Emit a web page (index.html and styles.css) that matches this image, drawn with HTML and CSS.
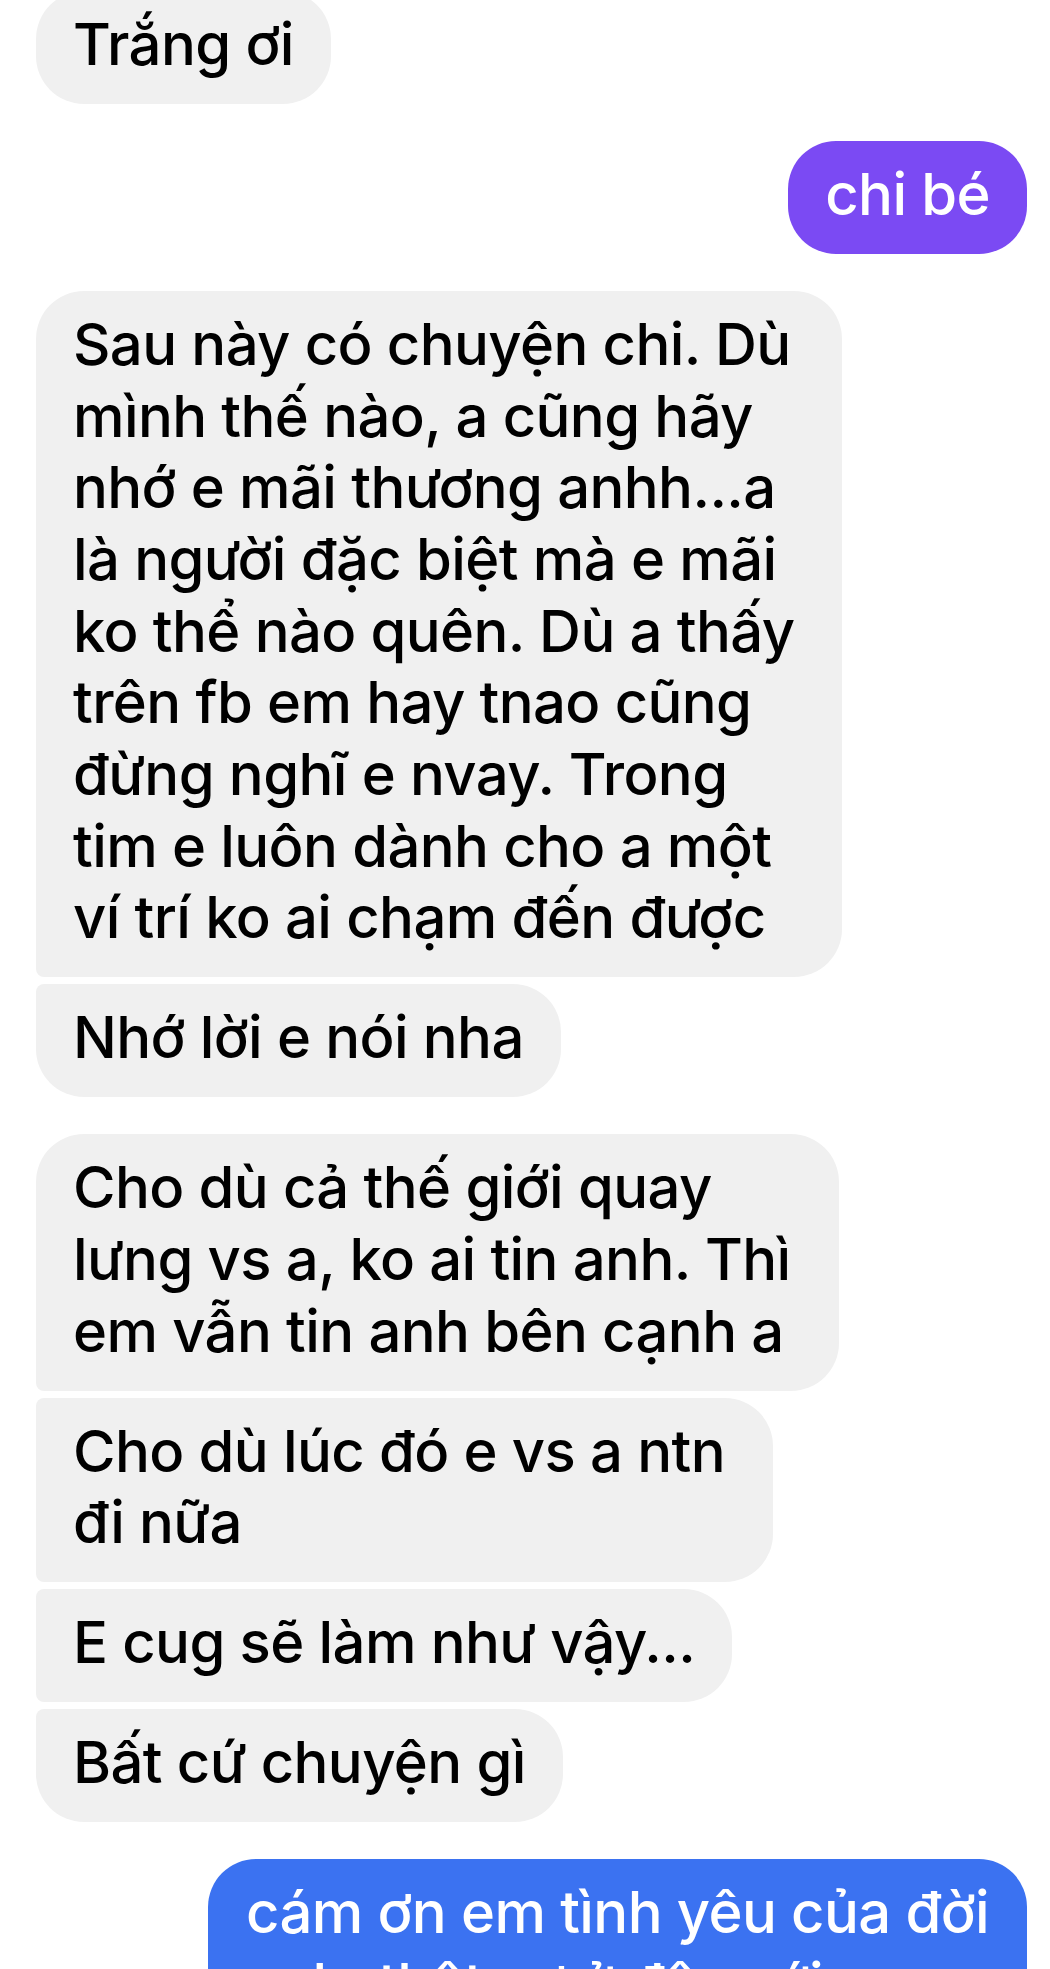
FILE: index.html
```html
<!DOCTYPE html>
<html lang="vi">
<head>
<meta charset="utf-8">
<title>Tin nhắn</title>
<link rel="stylesheet" href="styles.css">
</head>
<body>
<main class="thread">
  <div class="group group-in group-first">
    <div class="bubble in last">Trắng ơi</div>
  </div>

  <div class="group group-out">
    <div class="bubble out purple">chi bé</div>
  </div>

  <div class="group group-in">
    <div class="bubble in first multi">Sau này có chuyện chi. Dù<br>mình thế nào, a cũng hãy<br>nhớ e mãi thương anhh...a<br>là người đặc biệt mà e mãi<br>ko thể nào quên. Dù a thấy<br>trên fb em hay tnao cũng<br>đừng nghĩ e nvay. Trong<br>tim e luôn dành cho a một<br>ví trí ko ai chạm đến được</div>
    <div class="bubble in last">Nhớ lời e nói nha</div>
  </div>

  <div class="group group-in">
    <div class="bubble in first multi">Cho dù cả thế giới quay<br>lưng vs a, ko ai tin anh. Thì<br>em vẫn tin anh bên cạnh a</div>
    <div class="bubble in middle multi">Cho dù lúc đó e vs a ntn<br>đi nữa</div>
    <div class="bubble in middle">E cug sẽ làm như vậy...</div>
    <div class="bubble in last">Bất cứ chuyện gì</div>
  </div>

  <div class="group group-out">
    <div class="bubble out blue">cám ơn em tình yêu của đời<br>anh, thật sự ở đây với em</div>
  </div>
</main>
</body>
</html>
```
FILE: styles.css
```css
html, body {
  margin: 0;
  padding: 0;
  background: #ffffff;
  overflow: hidden;
}

body {
  width: 1050px;
  height: 1969px;
  font-family: "Inter", "Liberation Sans", sans-serif;
}

.thread {
  display: flex;
  flex-direction: column;
  gap: 37px;
  padding: 0 23px 0 36px;
  margin-top: -9px;
}

.group {
  display: flex;
  flex-direction: column;
  gap: 7px;
}

.group-in {
  align-items: flex-start;
}

.group-out {
  align-items: flex-end;
}

.bubble {
  font-size: 58px;
  line-height: 71.67px;
  letter-spacing: -0.6px;
  font-weight: 500;
  white-space: nowrap;
  padding: 18px 37px 23.33px 37px;
  border-radius: 48px;
  color: #000000;
  background: #f0f0f0;
}

.bubble.multi {
  padding-right: 48px;
}

.bubble.in.first {
  border-bottom-left-radius: 8px;
}

.bubble.in.middle {
  border-top-left-radius: 8px;
  border-bottom-left-radius: 8px;
}

.bubble.in.last {
  border-top-left-radius: 8px;
}

.group-first .bubble.in.last {
  border-top-left-radius: 48px;
}

.bubble.out {
  color: #ffffff;
}

.bubble.purple {
  background: #7b4af3;
}

.bubble.blue {
  background: #3b72f1;
  padding-left: 38px;
  padding-right: 38px;
}
```
